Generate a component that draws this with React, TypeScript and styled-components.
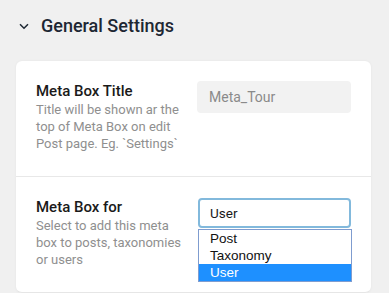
import * as React from "react";
import styled, { createGlobalStyle } from "styled-components";

const GlobalStyle = createGlobalStyle`
  body {
    margin: 0;
    background: #f0f0f0;
    font-family: Roboto, "Liberation Sans", Arial, sans-serif;
  }
`;

const Page = styled.div`
  width: 389px;
  height: 293px;
  overflow: hidden;
`;

const Header = styled.div`
  display: flex;
  align-items: center;
  gap: 12px;
  padding: 14px 0 0 19px;
  height: 24px;
`;

const HeaderTitle = styled.h2`
  margin: 0;
  font-size: 18px;
  line-height: 24px;
  font-weight: 500;
  color: #1d2733;
`;

const Card = styled.div`
  margin: 23px 18px 0 16px;
  background: #fff;
  border-radius: 6px;
  box-shadow: 0 0 3px rgba(0, 0, 0, 0.05);
  border-bottom: 1px solid #e6e6e6;
`;

const Row = styled.div<{ $last?: boolean }>`
  display: grid;
  grid-template-columns: 150px 1fr;
  column-gap: 11px;
  padding: 21px 20px 24px 20px;
  border-bottom: ${(p) => (p.$last ? "none" : "1px solid #e8e8e8")};
`;

const Label = styled.div`
  display: flex;
  flex-direction: column;
`;

const LabelTitle = styled.div`
  font-size: 15px;
  line-height: 19px;
  font-weight: 500;
  color: #1a1a1a;
`;

const LabelHelp = styled.div`
  font-size: 13px;
  line-height: 17px;
  color: #8f8f8f;
`;

const TextInput = styled.div`
  height: 32px;
  margin-top: -1px;
  box-sizing: border-box;
  padding: 0 12px;
  display: flex;
  align-items: center;
  background: #f2f2f2;
  border-radius: 4px;
  font-size: 14px;
  color: #8a8a8a;
`;

const SelectWrap = styled.div`
  position: relative;
  margin-left: 1px;
`;

const SelectBox = styled.div`
  height: 30px;
  box-sizing: border-box;
  padding: 0 10px;
  display: flex;
  align-items: center;
  border: 2px solid #82b9dc;
  border-radius: 4px;
  font-size: 13.5px;
  color: #1a1a1a;
`;

const OptionList = styled.ul`
  position: absolute;
  top: 31px;
  left: 0;
  right: -1px;
  margin: 0;
  padding: 0;
  list-style: none;
  background: #fff;
  border: 1px solid #7f9ccf;
`;

const Option = styled.li<{ $selected?: boolean }>`
  height: 17px;
  line-height: 17px;
  padding: 0 11px;
  font-family: "Liberation Sans", Arial, sans-serif;
  font-size: 13.5px;
  color: ${(p) => (p.$selected ? "#fff" : "#111")};
  background: ${(p) => (p.$selected ? "#1e90ff" : "transparent")};
`;

const Chevron = () => (
  <svg width="10" height="7" viewBox="0 0 10 7" fill="none">
    <path d="M1 1.2 L5 5.2 L9 1.2" stroke="#1d2733" strokeWidth="1.5" />
  </svg>
);

export default function App() {
  const options = ["Post", "Taxonomy", "User"];
  const selected = "User";
  return (
    <Page>
      <GlobalStyle />
      <Header>
        <Chevron />
        <HeaderTitle>General Settings</HeaderTitle>
      </Header>
      <Card>
        <Row>
          <Label>
            <LabelTitle>Meta Box Title</LabelTitle>
            <LabelHelp>
              Title will be shown ar the top of Meta Box on edit Post page. Eg. `Settings`
            </LabelHelp>
          </Label>
          <TextInput>Meta_Tour</TextInput>
        </Row>
        <Row $last>
          <Label>
            <LabelTitle>Meta Box for</LabelTitle>
            <LabelHelp>Select to add this meta box to posts, taxonomies or users</LabelHelp>
          </Label>
          <SelectWrap>
            <SelectBox>{selected}</SelectBox>
            <OptionList>
              {options.map((o) => (
                <Option key={o} $selected={o === selected}>
                  {o}
                </Option>
              ))}
            </OptionList>
          </SelectWrap>
        </Row>
      </Card>
    </Page>
  );
}
